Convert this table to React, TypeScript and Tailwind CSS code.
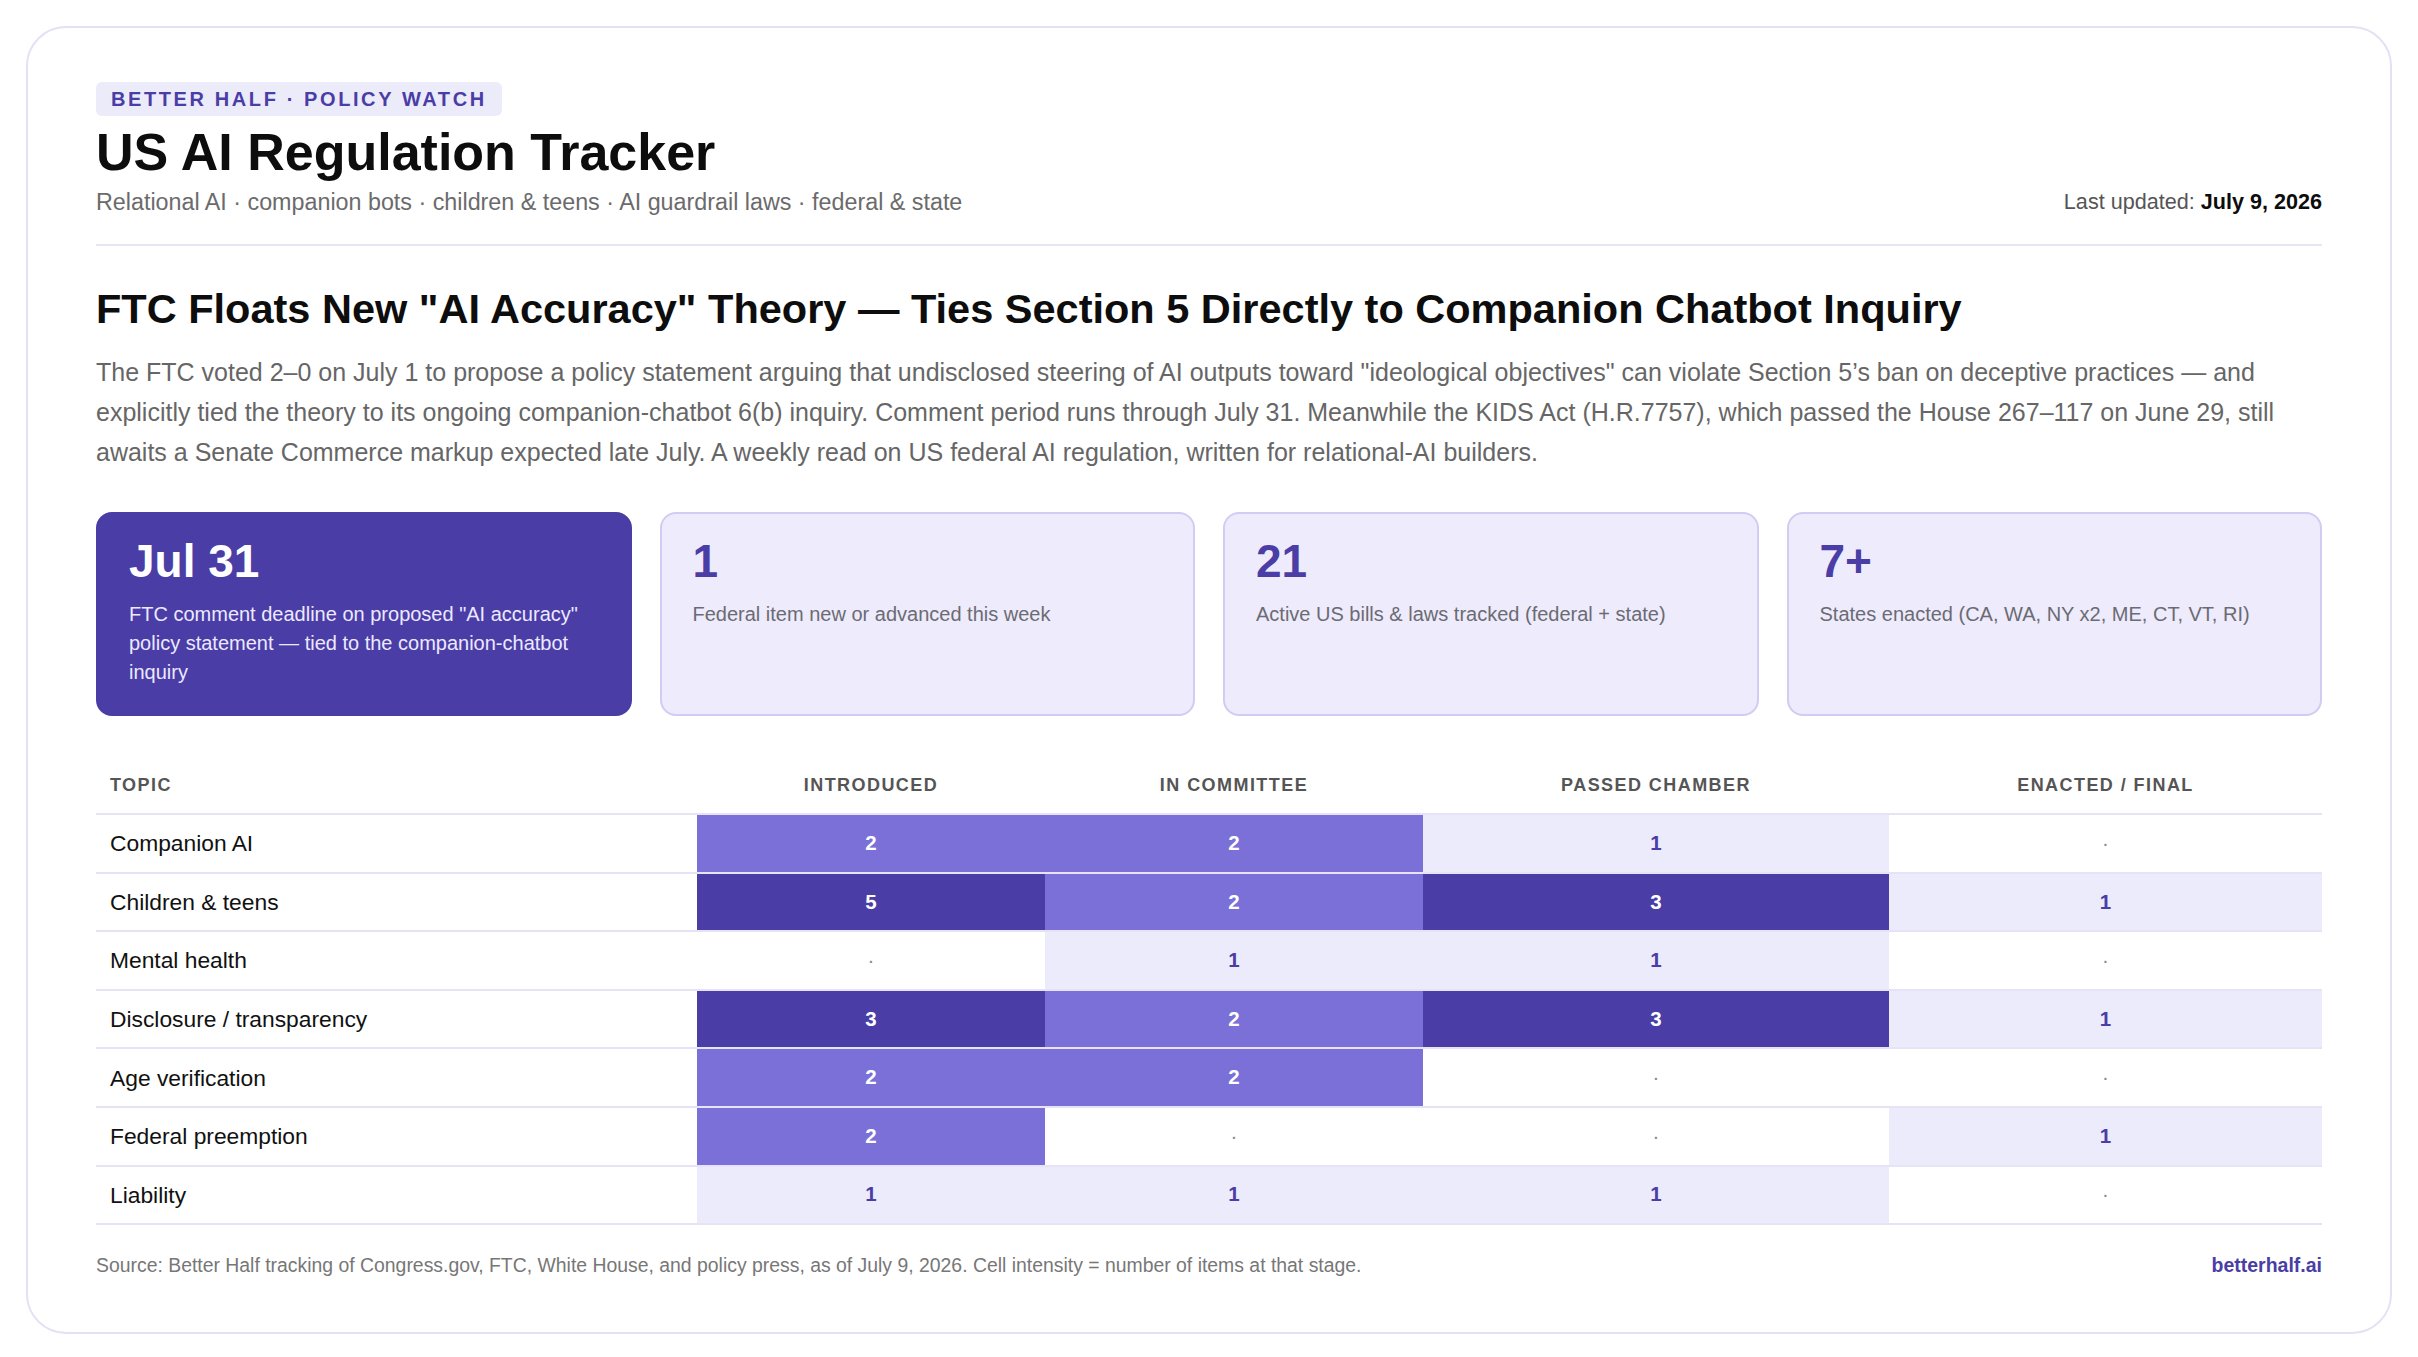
const stats = [
  {
    value: "Jul 31",
    label: 'FTC comment deadline on proposed "AI accuracy" policy statement — tied to the companion-chatbot inquiry',
    featured: true,
  },
  { value: "1", label: "Federal item new or advanced this week", featured: false },
  { value: "21", label: "Active US bills & laws tracked (federal + state)", featured: false },
  { value: "7+", label: "States enacted (CA, WA, NY x2, ME, CT, VT, RI)", featured: false },
];

const stages = ["Introduced", "In committee", "Passed chamber", "Enacted / final"];

const rows: { topic: string; counts: number[] }[] = [
  { topic: "Companion AI", counts: [2, 2, 1, 0] },
  { topic: "Children & teens", counts: [5, 2, 3, 1] },
  { topic: "Mental health", counts: [0, 1, 1, 0] },
  { topic: "Disclosure / transparency", counts: [3, 2, 3, 1] },
  { topic: "Age verification", counts: [2, 2, 0, 0] },
  { topic: "Federal preemption", counts: [2, 0, 0, 1] },
  { topic: "Liability", counts: [1, 1, 1, 0] },
];

function cellClass(n: number) {
  if (n >= 3) return "bg-[#4a3da6] text-white font-bold";
  if (n === 2) return "bg-[#7b6fd8] text-white font-bold";
  if (n === 1) return "bg-[#ecebfb] text-[#4a3da6] font-bold";
  return "bg-white text-[#888]";
}

function StatCard({ value, label, featured }: { value: string; label: string; featured: boolean }) {
  return (
    <div
      className={
        featured
          ? "h-[204px] rounded-[16px] border-2 border-[#4a3da6] bg-[#4a3da6] px-[31px] pt-[24px]"
          : "h-[204px] rounded-[16px] border-2 border-[#d2cbf2] bg-[#eeebfc] px-[31px] pt-[24px]"
      }
    >
      <div
        className={
          featured
            ? "text-[46px] font-bold leading-none text-white"
            : "text-[46px] font-bold leading-none text-[#4a3da6]"
        }
      >
        {value}
      </div>
      <p
        className={
          featured
            ? "mt-[16px] text-[20px] leading-[29px] text-[#ece9ff]"
            : "mt-[16px] text-[20px] leading-[29px] text-[#6b6b73]"
        }
      >
        {label}
      </p>
    </div>
  );
}

export default function App() {
  return (
    <div className="min-h-screen bg-white p-[26px] font-['Liberation_Sans',Arial,sans-serif]">
      <div className="rounded-[40px] border-2 border-[#e4e1f5] bg-white px-[68px] pb-[52px] pt-[54px]">
        <header>
          <span className="inline-block rounded-[6px] bg-[#ecebfa] px-[15px] py-[6px] text-[20px] font-bold leading-[22px] tracking-[0.13em] text-[#4a3da6]">
            BETTER HALF · POLICY WATCH
          </span>
          <div className="flex items-end justify-between">
            <div>
              <h1 className="mt-[8px] text-[52px] font-bold leading-[57px] text-[#0d0d0d]">
                US AI Regulation Tracker
              </h1>
              <p className="mt-[6px] text-[23.3px] leading-[30px] text-[#6b6b6b]">
                Relational AI · companion bots · children &amp; teens · AI guardrail laws · federal &amp; state
              </p>
            </div>
            <p className="text-[21.6px] leading-[30px] text-[#555]">
              Last updated: <span className="font-bold text-[#0d0d0d]">July 9, 2026</span>
            </p>
          </div>
        </header>

        <div className="mt-[27px] h-[2px] bg-[#e8e6f5]" />

        <section>
          <h2 className="mt-[38px] text-[41.5px] font-bold leading-[50px] text-[#0d0d0d]">
            FTC Floats New "AI Accuracy" Theory — Ties Section 5 Directly to Companion Chatbot Inquiry
          </h2>
          <p className="mt-[18px] text-[25px] leading-[40px] text-[#666]">
            The FTC voted 2–0 on July 1 to propose a policy statement arguing that undisclosed steering of AI
            outputs toward "ideological objectives" can violate Section 5’s ban on deceptive practices — and
            explicitly tied the theory to its ongoing companion-chatbot 6(b) inquiry. Comment period runs through
            July 31. Meanwhile the KIDS Act (H.R.7757), which passed the House 267–117 on June 29, still awaits a
            Senate Commerce markup expected late July. A weekly read on US federal AI regulation, written for
            relational-AI builders.
          </p>
        </section>

        <div className="mt-[40px] grid grid-cols-4 gap-[28px]">
          {stats.map((s) => (
            <StatCard key={s.value} {...s} />
          ))}
        </div>

        <div className="mt-[42px]">
          <div className="grid h-[57px] grid-cols-[601px_348px_378px_466px_1fr] items-center border-b-2 border-[#e6e3f6] text-[18px] font-bold uppercase tracking-[0.08em] text-[#555]">
            <div className="pl-[14px]">Topic</div>
            {stages.map((s) => (
              <div key={s} className="text-center">
                {s}
              </div>
            ))}
          </div>
          {rows.map((r) => (
            <div
              key={r.topic}
              className="grid h-[58.6px] grid-cols-[601px_348px_378px_466px_1fr] border-b-2 border-[#e6e3f6]"
            >
              <div className="flex items-center pl-[14px] text-[22.8px] text-[#111]">{r.topic}</div>
              {r.counts.map((n, i) => (
                <div key={i} className={"flex items-center justify-center text-[20.5px] " + cellClass(n)}>
                  {n === 0 ? "·" : n}
                </div>
              ))}
            </div>
          ))}
        </div>

        <footer className="mt-[26px] flex items-center justify-between">
          <p className="text-[19.4px] text-[#777]">
            Source: Better Half tracking of Congress.gov, FTC, White House, and policy press, as of July 9, 2026.
            Cell intensity = number of items at that stage.
          </p>
          <a href="#" className="text-[19.5px] font-bold text-[#4a3da6]">
            betterhalf.ai
          </a>
        </footer>
      </div>
    </div>
  );
}
